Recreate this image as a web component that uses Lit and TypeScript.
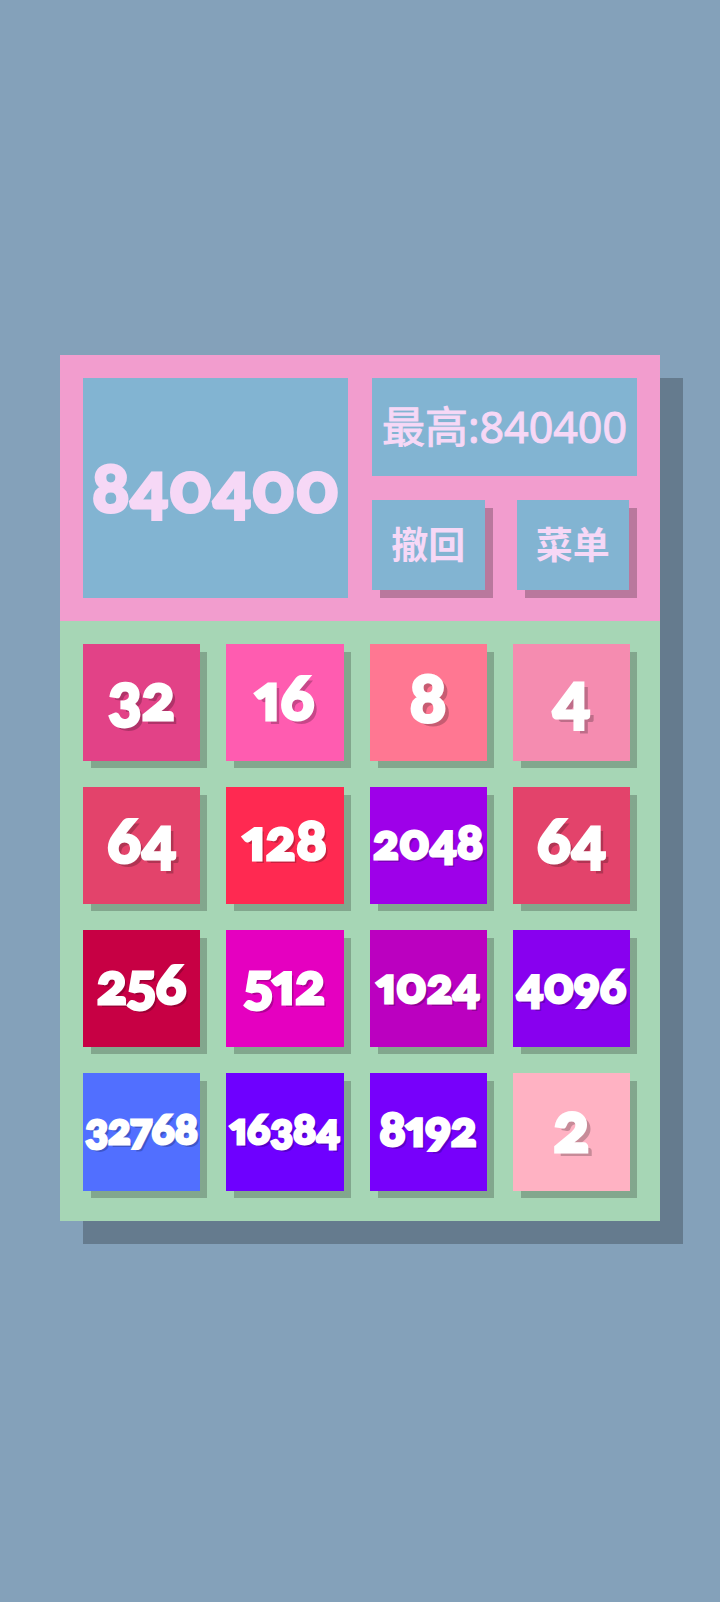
import { LitElement, html, css } from "lit";
import { customElement, property, state } from "lit/decorators.js";

@customElement("game-tile")
export class GameTile extends LitElement {
  @property({ type: Number }) value = 0;

  static styles = css`
    :host {
      display: block;
      aspect-ratio: 1;
      box-sizing: border-box;
      padding: 0 7px 7px 0;
      background: linear-gradient(rgba(0, 0, 0, 0.22), rgba(0, 0, 0, 0.22)) 8px 8px no-repeat;
    }
    .tile {
      display: flex;
      align-items: center;
      justify-content: center;
      box-sizing: border-box;
      height: 100%;
      padding-bottom: 8px;
      color: #fff;
      font-family: Lato, "Open Sans", sans-serif;
      font-weight: 900;
      font-variant-numeric: oldstyle-nums proportional-nums;
      line-height: 1;
      -webkit-text-stroke: 3px #fff;
      text-shadow: 3px 3px 0 rgba(0, 0, 0, 0.22);
    }
    .d1 { font-size: 68px; padding-bottom: 12px; text-shadow: 5px 4px 0 rgba(0, 0, 0, 0.22); }
    .d2 { font-size: 62px; padding-bottom: 12px; text-shadow: 4px 4px 0 rgba(0, 0, 0, 0.22); }
    .d3 { font-size: 56px; padding-bottom: 12px; }
    .d4 { font-size: 48px; }
    .d5 { font-size: 42px; }
    .v2 { background: #ffb2c3; }
    .v4 { background: #f58cb0; }
    .v8 { background: #ff7792; }
    .v16 { background: #ff5cb0; }
    .v32 { background: #e24287; }
    .v64 { background: #e3436b; }
    .v128 { background: #ff2951; }
    .v256 { background: #c70044; }
    .v512 { background: #e500c0; }
    .v1024 { background: #bb00c0; }
    .v2048 { background: #9e00e9; }
    .v4096 { background: #8800ef; }
    .v8192 { background: #7700fb; }
    .v16384 { background: #6e00ff; }
    .v32768 { background: #516fff; }
  `;

  render() {
    return html`<div class="tile v${this.value} d${String(this.value).length}">${this.value}</div>`;
  }
}

@customElement("app-root")
export class AppRoot extends LitElement {
  @state() private score = 840400;
  @state() private best = 840400;
  @state() private cells = [32, 16, 8, 4, 64, 128, 2048, 64, 256, 512, 1024, 4096, 32768, 16384, 8192, 2];

  static styles = css`
    :host {
      display: flex;
      flex-direction: column;
      justify-content: center;
      box-sizing: border-box;
      min-height: 100vh;
      padding: 0 60px 27px;
      background: #84a1ba;
      font-family: "Noto Sans", "Noto Sans CJK SC", sans-serif;
    }
    .panel {
      box-shadow: 23px 23px 0 rgba(0, 0, 0, 0.235);
    }
    .header {
      display: grid;
      grid-template-columns: 1fr 1fr;
      gap: 24px;
      padding: 23px;
      background: #f29dce;
      color: #f6d8f6;
    }
    .score,
    .best {
      display: flex;
      align-items: center;
      justify-content: center;
      background: #82b4d2;
    }
    .score {
      padding-bottom: 4px;
      font-family: Lato, "Open Sans", sans-serif;
      font-size: 69px;
      font-weight: 900;
      font-variant-numeric: oldstyle-nums proportional-nums;
      line-height: 1;
      -webkit-text-stroke: 3px #f6d8f6;
    }
    .side {
      display: grid;
      grid-template-rows: 98px 90px;
      gap: 24px;
      padding-bottom: 8px;
    }
    .best {
      font-size: 43px;
      font-weight: 400;
      line-height: 1;
      white-space: nowrap;
      -webkit-text-stroke: 1px #f6d8f6;
    }
    .actions {
      display: grid;
      grid-template-columns: 1fr 1fr;
      gap: 32px;
      padding-right: 8px;
    }
    .action {
      padding: 0 0 2px;
      border: 0;
      background: #82b4d2;
      box-shadow: 8px 8px 0 rgba(0, 0, 0, 0.235);
      color: inherit;
      font: 700 37px/1 "Noto Sans CJK SC", sans-serif;
      cursor: pointer;
    }
    .board {
      display: grid;
      grid-template-columns: repeat(4, 1fr);
      gap: 19px;
      padding: 23px;
      background: #a6d6b5;
    }
  `;

  render() {
    return html`
      <main class="panel">
        <header class="header">
          <div class="score">${this.score}</div>
          <div class="side">
            <div class="best">最高:${this.best}</div>
            <div class="actions">
              <button class="action" type="button">撤回</button>
              <button class="action" type="button">菜单</button>
            </div>
          </div>
        </header>
        <section class="board">
          ${this.cells.map((v) => html`<game-tile .value=${v}></game-tile>`)}
        </section>
      </main>
    `;
  }
}
